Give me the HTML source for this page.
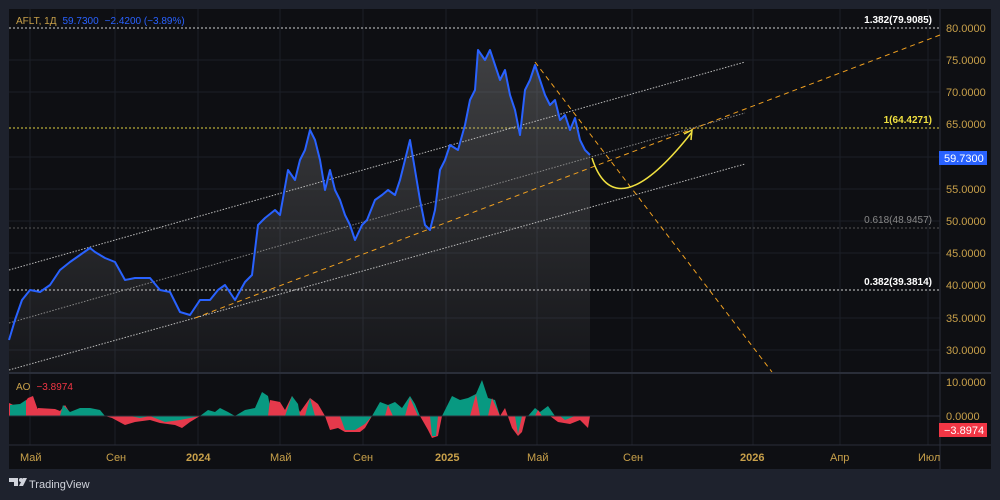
<!DOCTYPE html>
<html><head><meta charset="utf-8"><style>
body{margin:0;background:#1e222d;width:1000px;height:500px;overflow:hidden;font-family:"Liberation Sans",sans-serif}
svg{display:block}
</style></head><body>
<svg width="1000" height="500" viewBox="0 0 1000 500" xmlns="http://www.w3.org/2000/svg" font-family="Liberation Sans, sans-serif">
<defs>
<linearGradient id="g" x1="0" y1="0" x2="0" y2="1"><stop offset="0" stop-color="#9a9a9a" stop-opacity=".35"/><stop offset="1" stop-color="#9a9a9a" stop-opacity=".05"/></linearGradient>
</defs>
<rect x="0" y="0" width="1000" height="500" fill="#1e222d"/>
<rect x="9" y="9" width="982" height="460" fill="#0e0f13"/>
<!-- grid -->
<g stroke="#1c1f27" stroke-width="1">
<line x1="30" y1="9" x2="30" y2="445"/><line x1="115" y1="9" x2="115" y2="445"/><line x1="198" y1="9" x2="198" y2="445"/><line x1="280" y1="9" x2="280" y2="445"/><line x1="363" y1="9" x2="363" y2="445"/><line x1="446" y1="9" x2="446" y2="445"/><line x1="537" y1="9" x2="537" y2="445"/><line x1="632" y1="9" x2="632" y2="445"/><line x1="753" y1="9" x2="753" y2="445"/><line x1="840" y1="9" x2="840" y2="445"/><line x1="928" y1="9" x2="928" y2="445"/>
<line x1="9" y1="60" x2="940" y2="60"/><line x1="9" y1="92" x2="940" y2="92"/><line x1="9" y1="157" x2="940" y2="157"/><line x1="9" y1="189" x2="940" y2="189"/><line x1="9" y1="221" x2="940" y2="221"/><line x1="9" y1="253" x2="940" y2="253"/><line x1="9" y1="318" x2="940" y2="318"/><line x1="9" y1="350" x2="940" y2="350"/>
</g>
<line x1="940" y1="9" x2="940" y2="469" stroke="#2a2e39"/>
<line x1="9" y1="373" x2="991" y2="373" stroke="#2a2e39" stroke-width="2"/>
<line x1="9" y1="445" x2="991" y2="445" stroke="#2a2e39"/>
<!-- fib -->
<line x1="9" y1="28" x2="940" y2="28" stroke="#d0d0d0" stroke-dasharray="2 2"/>
<line x1="9" y1="128" x2="940" y2="128" stroke="#e0d040" stroke-dasharray="2 2"/>
<line x1="9" y1="228" x2="940" y2="228" stroke="#555" stroke-dasharray="2 2"/>
<line x1="9" y1="290" x2="940" y2="290" stroke="#d0d0d0" stroke-dasharray="2 2"/>
<text x="932" y="23" fill="#fff" font-size="10" text-anchor="end" font-weight="bold">1.382(79.9085)</text>
<text x="932" y="123" fill="#f0e040" font-size="10" text-anchor="end" font-weight="bold">1(64.4271)</text>
<text x="932" y="223" fill="#888" font-size="10" text-anchor="end">0.618(48.9457)</text>
<text x="932" y="285" fill="#fff" font-size="10" text-anchor="end" font-weight="bold">0.382(39.3814)</text>
<!-- price area -->
<path d="M9,340 L15,320 L22,300 L30,290 L40,292 L50,285 L60,270 L70,262 L80,255 L90,248 L95,252 L105,258 L115,262 L125,280 L135,278 L150,278 L160,290 L170,292 L180,312 L190,315 L200,300 L210,300 L218,290 L225,285 L235,300 L245,282 L252,275 L258,225 L265,218 L275,210 L280,215 L288,170 L295,180 L300,160 L305,150 L310,130 L315,140 L320,160 L325,190 L330,170 L335,190 L340,200 L345,215 L350,225 L355,240 L362,225 L367,220 L375,200 L382,195 L388,190 L395,195 L400,180 L405,160 L410,140 L415,170 L420,200 L425,225 L430,230 L435,210 L440,170 L445,160 L450,145 L458,150 L465,125 L470,100 L475,90 L478,50 L485,60 L490,50 L495,65 L500,80 L505,70 L510,95 L515,110 L520,135 L525,90 L530,80 L535,65 L540,80 L545,95 L550,105 L555,100 L560,120 L565,115 L570,130 L575,118 L580,140 L585,150 L590,155 L590,372 L9,372Z" fill="url(#g)"/>
<!-- channels -->
<line x1="9" y1="270" x2="745" y2="62" stroke="#bbb" stroke-dasharray="1.5 1.5"/>
<line x1="9" y1="323" x2="745" y2="113" stroke="#888" stroke-dasharray="1.5 1.5"/>
<line x1="9" y1="370" x2="745" y2="164" stroke="#bbb" stroke-dasharray="1.5 1.5"/>
<line x1="195" y1="318" x2="940" y2="35" stroke="#f0a020" stroke-dasharray="5 4"/>
<line x1="535" y1="62" x2="772" y2="372" stroke="#f0a020" stroke-dasharray="5 4"/>
<path d="M9,340 L15,320 L22,300 L30,290 L40,292 L50,285 L60,270 L70,262 L80,255 L90,248 L95,252 L105,258 L115,262 L125,280 L135,278 L150,278 L160,290 L170,292 L180,312 L190,315 L200,300 L210,300 L218,290 L225,285 L235,300 L245,282 L252,275 L258,225 L265,218 L275,210 L280,215 L288,170 L295,180 L300,160 L305,150 L310,130 L315,140 L320,160 L325,190 L330,170 L335,190 L340,200 L345,215 L350,225 L355,240 L362,225 L367,220 L375,200 L382,195 L388,190 L395,195 L400,180 L405,160 L410,140 L415,170 L420,200 L425,225 L430,230 L435,210 L440,170 L445,160 L450,145 L458,150 L465,125 L470,100 L475,90 L478,50 L485,60 L490,50 L495,65 L500,80 L505,70 L510,95 L515,110 L520,135 L525,90 L530,80 L535,65 L540,80 L545,95 L550,105 L555,100 L560,120 L565,115 L570,130 L575,118 L580,140 L585,150 L590,155" fill="none" stroke="#2962ff" stroke-width="2" stroke-linejoin="round"/>
<path d="M592,158 Q615,230 692,132" fill="none" stroke="#f0e040" stroke-width="1.5"/>
<path d="M684,134 L692,130 L691,140" fill="none" stroke="#f0e040" stroke-width="1.5"/>
<!-- AO -->
<g>
<path d="M9,416 L9,403 L20,408 L28,398 L33,396 L40,416Z" fill="#e5394b"/>
<path d="M10,416 L10,405 L20,404 L26,400 L26,416Z" fill="#089981"/>
<path d="M35,416 L38,408 L55,409 L60,411 L65,405 L72,416Z" fill="#e5394b"/>
<path d="M60,416 L63,405 L70,412 L80,408 L90,408 L100,410 L105,416Z" fill="#089981"/>
<path d="M105,416 L112,418 L125,425 L135,422 L150,420 L160,423 L175,425 L182,428 L190,422 L200,416Z" fill="#e5394b"/>
<path d="M130,416 L140,418 L150,416 L165,422 L180,420 L200,416Z" fill="#089981"/>
<path d="M200,416 L208,410 L215,412 L220,408 L228,412 L235,416Z" fill="#089981"/>
<path d="M235,416 L245,410 L255,408 L262,392 L268,396 L272,416Z" fill="#089981"/>
<path d="M268,416 L270,400 L280,402 L285,410 L292,396 L300,412 L310,398 L318,404 L325,416Z" fill="#e5394b"/>
<path d="M285,416 L292,396 L298,404 L300,416Z M305,416 L310,398 L315,416Z" fill="#089981"/>
<path d="M325,416 L330,430 L338,428 L345,432 L360,432 L365,428 L372,416Z" fill="#e5394b"/>
<path d="M340,416 L345,430 L355,430 L365,424 L372,416Z" fill="#089981"/>
<path d="M372,416 L380,402 L388,405 L395,402 L402,408 L410,396 L415,404 L420,416Z" fill="#089981"/>
<path d="M385,416 L388,405 L393,416Z M405,416 L410,398 L418,416Z" fill="#e5394b"/>
<path d="M420,416 L428,430 L432,438 L438,436 L442,416Z" fill="#e5394b"/>
<path d="M430,416 L432,436 L436,436 L438,416Z" fill="#089981"/>
<path d="M442,416 L452,396 L460,400 L468,398 L476,394 L482,380 L488,398 L495,400 L500,416Z" fill="#089981"/>
<path d="M470,416 L476,394 L480,416Z M488,416 L492,398 L500,416Z" fill="#e5394b"/>
<path d="M500,416 L505,408 L512,428 L518,436 L522,432 L526,416Z" fill="#e5394b"/>
<path d="M515,416 L518,434 L522,416Z" fill="#089981"/>
<path d="M528,416 L535,408 L540,412 L548,406 L555,416Z" fill="#089981"/>
<path d="M535,416 L538,410 L542,416Z M550,416 L558,422 L570,424 L580,420 L588,428 L590,416Z" fill="#e5394b"/>
<path d="M560,416 L565,420 L575,416Z" fill="#089981"/>
</g>
<line x1="9" y1="416" x2="940" y2="416" stroke="#2a2e39"/>
<!-- right axis -->
<g fill="#c8a04a" font-size="11">
<text x="946" y="32">80.0000</text><text x="946" y="64">75.0000</text><text x="946" y="96">70.0000</text><text x="946" y="128">65.0000</text><text x="946" y="193">55.0000</text><text x="946" y="225">50.0000</text><text x="946" y="257">45.0000</text><text x="946" y="289">40.0000</text><text x="946" y="322">35.0000</text><text x="946" y="354">30.0000</text>
<text x="946" y="386">10.0000</text><text x="946" y="420">0.0000</text>
</g>
<rect x="939" y="151" width="48" height="14" fill="#2962ff"/>
<text x="944" y="162" fill="#fff" font-size="11">59.7300</text>
<rect x="939" y="423" width="48" height="14" fill="#f23645"/>
<text x="944" y="434" fill="#fff" font-size="11">−3.8974</text>
<!-- time axis -->
<g fill="#c8a04a" font-size="11">
<text x="20" y="461">Май</text><text x="106" y="461">Сен</text><text x="186" y="461" font-weight="bold">2024</text><text x="270" y="461">Май</text><text x="353" y="461">Сен</text><text x="435" y="461" font-weight="bold">2025</text><text x="527" y="461">Май</text><text x="623" y="461">Сен</text><text x="740" y="461" font-weight="bold">2026</text><text x="830" y="461">Апр</text><text x="918" y="461">Июл</text>
</g>
<!-- legends -->
<text x="16" y="24" font-size="10"><tspan fill="#c8a04a">AFLT, 1Д</tspan><tspan fill="#2962ff" dx="6">59.7300</tspan><tspan fill="#2962ff" dx="6">−2.4200 (−3.89%)</tspan></text>
<text x="16" y="390" font-size="10"><tspan fill="#c8a04a">AO</tspan><tspan fill="#f23645" dx="6">−3.8974</tspan></text>
<!-- logo -->
<path d="M9,478 h9 v8 h-4 v-4 h-5z M19,478 h3 l-2,0 z" fill="#d1d4dc"/>
<circle cx="21" cy="480" r="2" fill="#d1d4dc"/>
<path d="M23,478 h4 l-4,8 h-4z" fill="#d1d4dc"/>
<text x="29" y="488" fill="#d1d4dc" font-size="11">TradingView</text>
</svg>
</body></html>
